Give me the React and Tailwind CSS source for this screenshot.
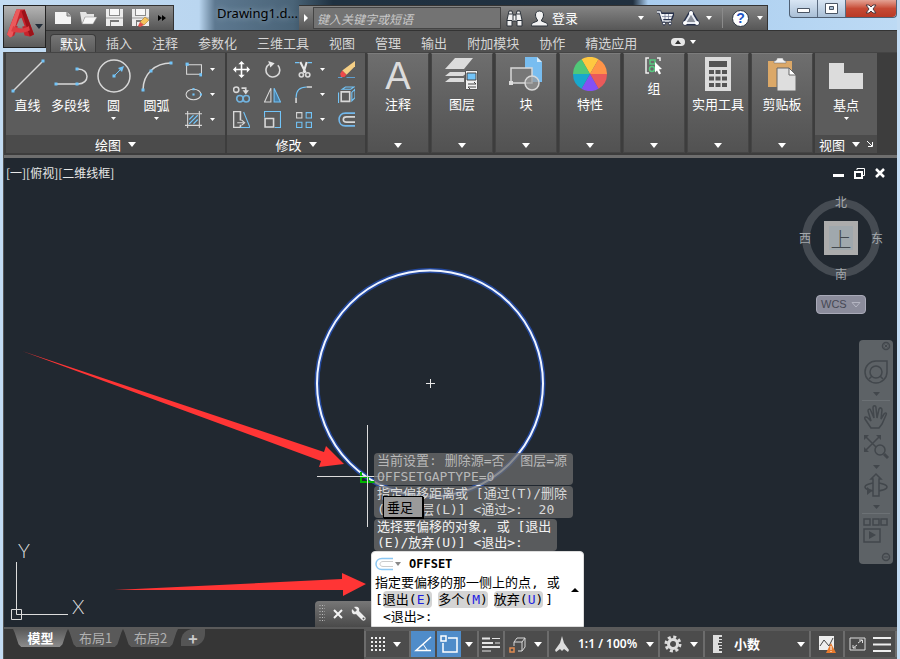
import clsx from "clsx";

const MENU_TABS = ["默认", "插入", "注释", "参数化", "三维工具", "视图", "管理", "输出", "附加模块", "协作", "精选应用"];

function Caret({ className = "h-1 w-1.5" }) {
  return (
    <svg viewBox="0 0 6 4" preserveAspectRatio="none" className={clsx("shrink-0 fill-current", className)}>
      <path d="M0 0h6L3 4z" />
    </svg>
  );
}

function Icon({ className = "size-4", box = 16, children }) {
  return (
    <svg
      viewBox={`0 0 ${box} ${box}`}
      fill="none"
      stroke="#d8d8d8"
      strokeWidth="1"
      className={clsx("shrink-0", className)}
    >
      {children}
    </svg>
  );
}

function Dots({ points, size = 3 }) {
  return points.map(([x, y]) => (
    <rect key={`${x}-${y}`} x={x - size / 2} y={y - size / 2} width={size} height={size} fill="#72c4f8" stroke="none" />
  ));
}

/* ---------- title bar ---------- */

function AppMenu() {
  return (
    <button
      aria-label="应用程序菜单"
      className="row-span-2 mt-[5px] flex h-[43px] items-start justify-between border border-[#222] bg-gradient-to-b from-[#b4b4b4] to-[#5a5a5a] pt-[3px] pr-[2px] pl-[3px] text-[#222c38]"
    >
      <svg viewBox="0 0 26 28" className="h-[30px] w-[27px]">
        <path d="M9 0h8l9 24-4 2-5-1-4-15-6 15-4 2-3-3z" fill="#c8232c" />
        <path d="M9 0h4L5 26l-2 1-3-3z" fill="#ea5a5c" />
        <path d="M17 0l9 24-4 2-8-24z" fill="#9c1219" />
        <path d="M6 16c5 3 11 3 15 0l1 4c-5 3-12 3-18 1z" fill="#dc3d42" />
        <path d="M12 9l-3 7c2 1 6 1 8 0l-3-8z" fill="#8e8e8e" />
      </svg>
      <Caret className="mt-[15px] h-[5px] w-2" />
    </button>
  );
}

function QuickAccess() {
  return (
    <div className="mt-[5px] flex w-32 items-center gap-2 border-t border-r border-[#333] bg-gradient-to-b from-[#8a8a8a] to-[#565656] pl-2">
      <button aria-label="新建">
        <svg viewBox="0 0 18 16" className="h-4 w-[18px]">
          <path d="M1 2h12l4 4v8H1z" fill="#f4f4f4" />
          <path d="M13 2v4h4" fill="#bbb" stroke="#777" />
        </svg>
      </button>
      <button aria-label="打开">
        <svg viewBox="0 0 18 16" className="h-4 w-[18px]">
          <path d="M0 2h6l1 2h7v3H5L2 14z" fill="#e4e4e4" />
          <path d="M5 7h12l-4 7H2z" fill="#f7f7f7" stroke="#888" strokeWidth=".5" />
        </svg>
      </button>
      <button aria-label="保存">
        <SaveGlyph />
      </button>
      <button aria-label="另存为">
        <SaveGlyph pencil />
      </button>
      <button aria-label="自定义">
        <svg viewBox="0 0 8 6" className="h-1.5 w-2 fill-black">
          <path d="M0 0l4 3-4 3zM4 0l4 3-4 3z" />
        </svg>
      </button>
    </div>
  );
}

function SaveGlyph({ pencil }) {
  return (
    <svg viewBox="0 0 18 18" className="size-[18px]">
      <path d="M0 0h17v17H0z" fill="#ececec" />
      <path d="M3 0h11v7H3z" fill="#8a8a8a" />
      <path d="M4 0h9v6H4z" fill="#f7f7f7" />
      <path d="M0 9h17" stroke="#999" />
      <path d="M4 11h9v6H4z" fill="#777" />
      <path d="M5 13h8v4H5z" fill="#eee" />
      {pencil && (
        <>
          <path d="M8 13l5-5 4 3-5 5z" fill="#f4c45c" stroke="#9a6a20" strokeWidth=".5" />
          <path d="M8 13l4 3-4 2-2-1z" fill="#e05048" />
        </>
      )}
    </svg>
  );
}

function InfoCenter() {
  return (
    <div className="mt-[5px] flex w-[469px] items-center border-t border-r border-[#333] bg-gradient-to-b from-[#858585] to-[#575757] text-white">
      <button aria-label="展开" className="flex w-[14px] justify-center">
        <svg viewBox="0 0 4 8" className="h-2 w-1 fill-white">
          <path d="M0 0l4 4-4 4z" />
        </svg>
      </button>
      <input
        aria-label="搜索"
        placeholder="键入关键字或短语"
        className="h-[22px] w-[188px] border border-[#444] bg-[#737373] pl-[3px] text-[12px] italic placeholder:text-[#c9c9c9]"
      />
      <button aria-label="查找" className="ml-[5px]">
        <svg viewBox="0 0 17 17" className="size-[17px]" stroke="#2c333b">
          <path d="M3 1h3l1 4h3l1-4h3l2 9v6h-5v-5H6v5H1v-6z" fill="#f2f2f2" />
          <path d="M1 10.500h5M11 10.500h5M7 5v5M10 5v5M3 4h3M11 4h3" />
        </svg>
      </button>
      <button className="ml-2 flex items-center gap-1 text-[13px]">
        <svg viewBox="0 0 17 17" className="size-[17px]" fill="#f2f2f2" stroke="#2c333b">
          <path d="M8.500 1c3 0 4 2 4 4s-1 4-2 5v1l5 2c1 1 1 2 1 3H.5c0-1 0-2 1-3l5-2v-1c-1-1-2-3-2-5s1-4 4-4z" />
        </svg>
        登录
      </button>
      <button aria-label="登录选项" className="ml-auto">
        <Caret />
      </button>
      <button aria-label="商店" className="ml-3">
        <svg viewBox="0 0 18 16" className="h-4 w-[18px]" fill="none">
          <path d="M1 2h3l3 9h8M5 4h12l-2 5H6z" stroke="#26304a" strokeWidth="3" />
          <path d="M5 4h12l-2 5H6z" fill="#f0f2f6" />
          <path d="M1 2h3l3 9h8" stroke="#f0f2f6" strokeWidth="1.500" />
          <path d="M6 6.500h10M9 4v5M12.500 4v5" stroke="#6d7690" strokeWidth=".7" />
          <circle cx="8" cy="13.500" r="1.500" fill="#fff" stroke="#26304a" />
          <circle cx="14" cy="13.500" r="1.500" fill="#fff" stroke="#26304a" />
        </svg>
      </button>
      <button aria-label="A360" className="ml-2 flex items-center gap-1.5">
        <svg viewBox="0 0 18 16" className="h-4 w-[18px]" fill="none">
          <path d="M9 3l6 10H3z" stroke="#26304a" strokeWidth="5" strokeLinejoin="round" />
          <path d="M9 3l6 10H3z" stroke="#e8ecf4" strokeWidth="2" fill="#8a8f9a" />
          <circle cx="9" cy="3" r="2" fill="#fff" />
          <circle cx="15" cy="13" r="2" fill="#fff" />
          <circle cx="3" cy="13" r="2" fill="#fff" />
        </svg>
        <Caret />
      </button>
      <span className="ml-[10px] h-5 w-px bg-[#8a8a8a]" />
      <button aria-label="帮助" className="mr-1 ml-[9px] flex items-center gap-2">
        <span className="flex size-[17px] items-center justify-center rounded-full border border-[#2b3440] bg-white font-['Liberation_Sans'] text-[14px] leading-none font-bold text-[#1b54c4]">
          ?
        </span>
        <Caret />
      </button>
    </div>
  );
}

function WindowButtons() {
  return (
    <div className="ml-auto flex h-[18px] w-[108px] self-start rounded-b border border-t-0 border-[#4e5f73] bg-gradient-to-b from-[#d9e6f4] to-[#a9bfd6]">
      <button aria-label="最小化" className="flex flex-1 items-center justify-center border-r border-[#5a6b80] pt-1">
        <svg viewBox="0 0 13 6" className="h-1.5 w-[13px]">
          <path d="M.5.5h12v4H.5z" fill="#fff" stroke="#4a5564" />
        </svg>
      </button>
      <button aria-label="最大化" className="flex flex-1 items-center justify-center border-r border-[#5a6b80]">
        <svg viewBox="0 0 13 11" className="h-[11px] w-[13px]">
          <path d="M.5.5h12v10H.5z" fill="#fff" stroke="#4a5564" />
          <path d="M4.500 3.500h4v3h-4z" fill="#a8bdd2" stroke="#4a5564" />
        </svg>
      </button>
      <button
        aria-label="关闭"
        className="flex w-[50px] items-center justify-center rounded-br bg-gradient-to-b from-[#e3a294] via-[#c64a35] to-[#b93a26]"
      >
        <svg viewBox="0 0 12 10" className="h-[10px] w-3">
          <path d="M1 1h3l2 2 2-2h3L8 5l3 4H8L6 7 4 9H1l3-4z" fill="#fff" stroke="#4d3a40" />
        </svg>
      </button>
    </div>
  );
}

function Header() {
  return (
    <header className="grid grid-cols-[43px_1fr] grid-rows-[30px_22px] bg-[linear-gradient(90deg,#c3dcf3_0,#bad6f0_196px,#5d7890_212px,#4a6478_290px,#1f3141_330px,#21303f_630px,#a9cdef_645px,#bddaf4_100%)]">
      <AppMenu />
      <div className="flex min-w-0">
        <QuickAccess />
        <h1 className="ml-auto w-[82px] pt-[5px] font-['Noto_Sans'] text-[13px] leading-4 whitespace-nowrap text-black [text-shadow:0_0_6px_#a9bccc]">
          Drawing1.d...
        </h1>
        <InfoCenter />
        <div className="flex w-[129px]">
          <WindowButtons />
        </div>
      </div>
      <nav className="flex border-t border-[#333] bg-[#505050] pl-1">
        {MENU_TABS.map((t, i) => (
          <button
            key={t}
            className={clsx(
              "text-[13px] leading-[18px] whitespace-nowrap",
              i === 0
                ? "mt-[3px] rounded-t-sm border-x border-t border-[#3c3c3c] bg-gradient-to-b from-[#757575] to-[#5c5c5c] px-[9px] text-white"
                : "px-[10px] pt-[2px] text-[#d6d6d6]"
            )}
          >
            {t}
          </button>
        ))}
        <button aria-label="最小化功能区" className="ml-6 flex items-center gap-[5px] text-white">
          <span className="flex h-2 w-[14px] items-center justify-center rounded-sm bg-[#e6e6e6] text-[#333]">
            <Caret className="h-1 w-1.5 rotate-180" />
          </span>
          <Caret />
        </button>
      </nav>
    </header>
  );
}

/* ---------- ribbon ---------- */

const DRAW_TOOLS = [
  {
    label: "直线",
    icon: (
      <>
        <path d="M2 32L31 3" strokeWidth="1.500" />
        <Dots points={[[2, 32], [32, 2]]} />
      </>
    ),
  },
  {
    label: "多段线",
    icon: (
      <>
        <path d="M2 25h22c12 0 12-15 0-15" strokeWidth="1.500" />
        <Dots points={[[2, 25], [23, 25], [23, 10]]} />
      </>
    ),
  },
  {
    label: "圆",
    menu: true,
    icon: (
      <>
        <circle cx="17" cy="17" r="16" strokeWidth="1.500" />
        <path d="M17 17l7-7" stroke="#72c4f8" />
        <path d="M21 9l6-2-2 6z" fill="#72c4f8" stroke="none" />
        <Dots points={[[17, 17]]} />
      </>
    ),
  },
  {
    label: "圆弧",
    menu: true,
    icon: (
      <>
        <path d="M3 31C3 15 15 4 31 4" strokeWidth="1.500" />
        <Dots points={[[3, 31], [11, 12], [31, 4]]} />
      </>
    ),
  },
];

const SHAPE_TOOLS = [
  {
    name: "矩形",
    icon: (
      <>
        <path d="M1.500 3.500h14v9h-14z" />
        <Dots points={[[2, 3], [15, 13]]} />
      </>
    ),
  },
  {
    name: "椭圆",
    icon: (
      <>
        <ellipse cx="8" cy="8" rx="7" ry="5" />
        <Dots points={[[8, 3], [15, 8], [8, 8]]} size={2} />
      </>
    ),
  },
  {
    name: "图案填充",
    icon: (
      <>
        <path d="M0 2.500h16M0 13.500h16M2.500 0v16M13.500 0v16" />
        <path d="M4 8l4-4M4 12l8-8M8 12l4-4" stroke="#72c4f8" />
      </>
    ),
  },
];

const MODIFY_TOOLS = [
  {
    name: "移动",
    icon: (
      <>
        <path d="M8 2v12M2 8h12" strokeWidth="1.500" stroke="#fff" />
        <path d="M8 0l3 3H5zM8 16l3-3H5zM0 8l3-3v6zM16 8l-3-3v6z" fill="#fff" stroke="none" />
      </>
    ),
  },
  {
    name: "旋转",
    icon: (
      <>
        <path d="M5 3a6.500 6.500 0 1 0 8 1" strokeWidth="1.500" />
        <path d="M4 0l6 2-4 4z" fill="#e6e6e6" stroke="none" />
      </>
    ),
  },
  {
    name: "修剪",
    menu: true,
    icon: (
      <>
        <path d="M0 1.500h4M12 1.500h4" stroke="#72c4f8" />
        <path d="M5 1l5 10M11 1L8 11" strokeWidth="2" stroke="#e8e8e8" />
        <circle cx="6" cy="13" r="2" strokeWidth="1.500" />
        <circle cx="12" cy="13" r="2" strokeWidth="1.500" />
      </>
    ),
  },
  {
    name: "删除",
    icon: (
      <>
        <path d="M16 0v5l-8 8-4-4z" fill="#f5cf85" stroke="none" />
        <path d="M4 9l4 4-2 2H3l-1-3z" fill="#ee4a4a" stroke="none" />
        <path d="M0 15.500h4M8 15.500h8" stroke="#5f9fd0" />
      </>
    ),
  },
  {
    name: "复制",
    icon: (
      <>
        <circle cx="3" cy="3.500" r="2.500" strokeWidth="1.500" />
        <path d="M8 2h4v3" strokeWidth="1.500" />
        <path d="M9 4h6l-3 4z" fill="#ddd" stroke="none" />
        <circle cx="6.500" cy="12" r="3" stroke="#72b4e0" strokeWidth="1.500" />
        <circle cx="12.500" cy="12" r="3" stroke="#72b4e0" strokeWidth="1.500" />
      </>
    ),
  },
  {
    name: "镜像",
    icon: (
      <>
        <path d="M6.500 2v13H.5z" />
        <path d="M9.500 2v13h6z" stroke="#72c4f8" fill="#4a7fa6" />
      </>
    ),
  },
  {
    name: "圆角",
    menu: true,
    icon: (
      <>
        <path d="M1 11C1 4 5 1 11 1" stroke="#72c4f8" />
        <path d="M1 11v5M11 1h5" strokeWidth="1.500" />
      </>
    ),
  },
  {
    name: "分解",
    icon: (
      <>
        <path d="M3 5.500h8v9H3z" strokeWidth="1.500" />
        <path d="M4 3l3-2h8l-3 2zM13 6l3-3v8l-3 3zM.5 6v10" stroke="#72c4f8" />
      </>
    ),
  },
  {
    name: "拉伸",
    icon: (
      <>
        <path d="M7 9V.5H.5v15H7V13" strokeWidth="1.500" />
        <path d="M10 1l6 14.500H7" stroke="#72c4f8" />
        <path d="M4 11h6M8 8.500l3 2.500-3 2.500" />
      </>
    ),
  },
  {
    name: "缩放",
    icon: (
      <>
        <path d="M.5 6V.5h15v15H10" stroke="#72c4f8" />
        <path d="M1 7h8v8H1z" strokeWidth="1.500" />
      </>
    ),
  },
  {
    name: "阵列",
    menu: true,
    icon: (
      <>
        <path d="M1.500 1.500h5v5h-5z" />
        <path d="M10.500 1.500h5v5h-5zM1.500 10.500h5v5h-5zM10.500 10.500h5v5h-5z" stroke="#72c4f8" />
      </>
    ),
  },
  {
    name: "偏移",
    icon: (
      <>
        <path d="M16 2H7C-1 2-1 14 7 14h9" stroke="#72b8ec" strokeWidth="1.500" />
        <path d="M16 5.500H8c-4 0-4 5 0 5h8" strokeWidth="1.500" />
      </>
    ),
  },
];

const COLLAPSED_PANELS = [
  {
    label: "注释",
    icon: (
      <text x="17" y="32" textAnchor="middle" className="font-['Liberation_Sans'] text-[38px]" fill="#dcdcdc" stroke="none">
        A
      </text>
    ),
  },
  {
    label: "图层",
    icon: (
      <>
        <path d="M10 1h18l-9 11H0zM5 15h18l-5 4H0zM5 21h14v4H0z" fill="#dcdcdc" stroke="none" />
        <path d="M20.500 13.500h12v19h-12z" fill="#f0f0f0" stroke="#555" />
        <path d="M22 16h9v7h-9z" fill="#72c4f8" stroke="#444" />
        <path d="M23 27h8l-2-2M31 30h-8l2 2" stroke="#444" />
      </>
    ),
  },
  {
    label: "块",
    icon: (
      <>
        <path d="M16 0h12l5 5v20H16z" fill="#78bdf0" stroke="none" />
        <path d="M28 0v5h5z" fill="#d6ecfb" stroke="none" />
        <path d="M2 11h21v15H2z" fill="#777" strokeWidth="1.500" />
        <circle cx="23" cy="26" r="7" fill="#999" fillOpacity=".7" strokeWidth="1.500" />
        <path d="M0 24h4v4H0z" fill="#ddd" stroke="none" />
      </>
    ),
  },
  {
    label: "特性",
    icon: (
      <g stroke="none">
        <path d="M17 17L8.500 2.300A17 17 0 0 1 25.500 2.300z" fill="#ffc840" />
        <path d="M17 17L25.500 2.300A17 17 0 0 1 34 17z" fill="#ff9448" />
        <path d="M17 17H34A17 17 0 0 1 25.500 31.700z" fill="#ea5a5a" />
        <path d="M17 17L25.500 31.700A17 17 0 0 1 8.500 31.700z" fill="#8450f4" />
        <path d="M17 17L8.500 31.700A17 17 0 0 1 0 17z" fill="#18a8cc" />
        <path d="M17 17H0A17 17 0 0 1 8.500 2.300z" fill="#50c878" />
      </g>
    ),
  },
  {
    label: "组",
    small: true,
    icon: (
      <>
        <path d="M4 1H1v15h3M12 1h3v3" strokeWidth="1.500" stroke="#eee" />
        <path d="M5 3h5v4H5z" stroke="#58c880" strokeWidth="1.500" />
        <circle cx="7" cy="12" r="2.500" stroke="#58c880" strokeWidth="1.500" />
        <path d="M10 5l7 7-3 .5 2 4-2 1-2-4-2 2z" fill="#fff" stroke="none" />
      </>
    ),
  },
  {
    label: "实用工具",
    icon: (
      <>
        <path d="M4 0h26v34H4z" fill="#dcdcdc" stroke="none" />
        <path d="M8 4h18v6H8z" fill="#555" stroke="none" />
        <path d="M8 15h18M8 21.500h18M8 28h18" stroke="#555" strokeWidth="4" strokeDasharray="5 1.500" />
      </>
    ),
  },
  {
    label: "剪贴板",
    icon: (
      <>
        <path d="M3 4h24v26H3z" fill="#dba868" stroke="none" />
        <path d="M9 4c2 0 3-1 3-3h6c0 2 1 3 3 3v2H9z" fill="#f2f2f2" stroke="#666" strokeWidth=".5" />
        <path d="M12 11h12l7 7v16H12z" fill="#dedede" stroke="#666" />
        <path d="M24 11v7h7z" fill="#fff" stroke="#666" />
      </>
    ),
  },
];

function PanelTitle({ children }) {
  return (
    <button className="flex h-[18px] items-center justify-center gap-[7px] bg-[#4b4b4b] text-[13px] leading-none text-white">
      {children}
    </button>
  );
}

function Ribbon() {
  return (
    <section className="flex h-[103px] gap-[2px] border-t border-[#444] bg-[#3d3d3d] pb-[2px] pl-[2px] text-white">
      <div className="flex w-[219px] flex-col bg-[#5c5c5c]">
        <div className="flex flex-1">
          {DRAW_TOOLS.map((t) => (
            <button key={t.label} className="flex w-[43px] flex-col items-center pt-1.5 text-[13px]">
              <Icon box={34} className="size-[34px]">
                {t.icon}
              </Icon>
              <span className="pt-1 leading-4 whitespace-nowrap">{t.label}</span>
              {t.menu && <Caret className="mt-1 h-[3px] w-[5px]" />}
            </button>
          ))}
          <div className="ml-auto flex w-10 flex-col pt-1">
            {SHAPE_TOOLS.map((t) => (
              <button key={t.name} aria-label={t.name} className="flex h-[25px] items-center gap-2">
                <Icon className="size-[17px]">{t.icon}</Icon>
                <Caret className="h-[3px] w-[5px]" />
              </button>
            ))}
          </div>
        </div>
        <PanelTitle>
          绘图
          <Caret className="h-[5px] w-2" />
        </PanelTitle>
      </div>

      <div className="flex w-[138px] flex-col bg-[#5c5c5c]">
        <div className="grid flex-1 grid-cols-[31px_31px_43px_20px] content-start pt-1 pl-1.5">
          {MODIFY_TOOLS.map((t) => (
            <button key={t.name} aria-label={t.name} className="flex h-[25px] items-center gap-2">
              <Icon className="size-[17px]">{t.icon}</Icon>
              {t.menu && <Caret className="h-[3px] w-[5px]" />}
            </button>
          ))}
        </div>
        <PanelTitle>
          修改
          <Caret className="h-[5px] w-2" />
        </PanelTitle>
      </div>

      {COLLAPSED_PANELS.map((p) => (
        <button
          key={p.label}
          className="flex w-[62px] flex-col items-center border border-[#454545] border-t-[#7c7c7c] bg-gradient-to-b from-[#6e6e6e] to-[#525252] pt-[3px] pb-1 text-[13px]"
        >
          <Icon box={p.small ? 18 : 34} className={p.small ? "size-[18px]" : "size-[34px]"}>
            {p.icon}
          </Icon>
          <span className="pt-[5px] leading-4 whitespace-nowrap">{p.label}</span>
          <Caret className="mt-auto h-[5px] w-2" />
        </button>
      ))}

      <div className="flex w-[62px] flex-col bg-[#5c5c5c]">
        <button className="flex flex-1 flex-col items-center pt-1.5 text-[13px]">
          <Icon box={34} className="size-[34px]">
            <path d="M0 4h15v10h19v16H0z" fill="#dcdcdc" stroke="none" />
          </Icon>
          <span className="pt-1 leading-4">基点</span>
          <Caret className="mt-1 h-[3px] w-[5px]" />
        </button>
        <PanelTitle>
          视图
          <Caret className="h-[5px] w-2" />
          <svg viewBox="0 0 6 6" className="size-1.5" fill="none" stroke="#fff">
            <path d="M0 0l5 5M5.500 1v4.500H1" />
          </svg>
        </PanelTitle>
      </div>
    </section>
  );
}

/* ---------- drawing area ---------- */

function Drawing() {
  return (
    <svg viewBox="4 158 893 469" className="absolute top-0 left-0 h-[469px] w-[893px]" fill="none">
      <circle cx="430" cy="383.500" r="113" stroke="#2450b8" strokeWidth="5" strokeOpacity=".8" />
      <circle cx="430" cy="383.500" r="113" stroke="#f0f5ff" strokeWidth="2" />
      <path d="M426 383.500h9M430.500 379v9" stroke="#e8e8e8" />

      <path d="M361 472v10h14M361 477h7v5" stroke="#00b400" strokeWidth="2" />
      <path d="M367.500 425v102M317 476.500h68" stroke="#dcdcdc" />

      <path d="M22 351l302 101 2-6 18 18-25 3 2-6z" fill="#ff3535" />
      <path d="M114 590l228-11v-6l24 11-23 12v-6z" fill="#ff3535" />

      <g stroke="#dcdcdc">
        <path d="M11.500 609.500h10v10h-10zM16.500 562v52.500H68" />
      </g>
      <g fill="#dcdcdc" className="font-['Lato'] text-[20px] font-light">
        <text x="18" y="558">Y</text>
        <text x="72" y="614">X</text>
      </g>
    </svg>
  );
}

function ViewCube() {
  return (
    <div className="absolute top-9 right-3 flex w-[88px] flex-col items-center text-[12px] text-[#a4a8ac]">
      <div className="relative grid h-[88px] w-[88px] grid-cols-[16px_1fr_16px] grid-rows-[16px_1fr_16px] place-items-center leading-4">
        <svg viewBox="0 0 88 88" className="absolute inset-0 size-[88px]" fill="none">
          <circle cx="44" cy="44" r="35" stroke="#454b52" strokeWidth="8" />
        </svg>
        <span className="relative col-start-2 row-start-1">北</span>
        <span className="relative col-start-1 row-start-2">西</span>
        <button className="relative col-start-2 row-start-2 flex size-[34px] items-center justify-center border-[5px] border-[#acacac] bg-[#a0a8ad] text-[21px] leading-none font-light text-[#42484e]">
          上
        </button>
        <span className="relative col-start-3 row-start-2">东</span>
        <span className="relative col-start-2 row-start-3">南</span>
      </div>
      <button className="mt-[13px] flex h-[19px] w-[50px] items-center justify-between rounded border border-[#a9aab8] bg-[#8b8c9b] px-1 font-['Liberation_Sans'] text-[11px] text-[#474955]">
        WCS
        <svg viewBox="0 0 10 6" className="h-1.5 w-[10px]" fill="none" stroke="#b4b5c2">
          <path d="M1 .5h8L5 5z" />
        </svg>
      </button>
    </div>
  );
}

function NavBar() {
  return (
    <div className="absolute top-[182px] right-[4px] h-[224px] w-[34px] rounded bg-[#5d6266]">
      <svg viewBox="0 0 34 224" className="h-[224px] w-[34px]" fill="none" stroke="#42474c" strokeWidth="1.500">
        <circle cx="27" cy="6" r="3.500" />
        <path d="M25.500 4.500l3 3M28.500 4.500l-3 3" strokeWidth="1" />
        <path d="M17 21h11v11a11 11 0 1 1-11-11z" />
        <circle cx="17" cy="32" r="6" />
        <path d="M10 39l3-3M24 39l-3-3" />
        <path d="M14 52h7l-3.500 4z" fill="#42474c" stroke="none" />
        <path d="M3 60.500h28" stroke="#6c7175" strokeWidth="1" />
        <path d="M12 88l-6-9c-1-2 1-3 3-1l3 3-3-10c0-2 2-3 3 0l3 7-1-10c0-3 3-3 3 0l1 10 2-9c1-2 3-1 3 1l-1 9 3-5c2-2 3-1 2 1l-4 9-3 4z" />
        <path d="M6 96l15 15M21 96L6 111" strokeWidth="1.500" />
        <path d="M5 95h5l-5 5zM22 95v5l-5-5zM5 112v-5l5 5z" fill="#42474c" stroke="none" />
        <circle cx="21" cy="110" r="5" fill="#5d6266" />
        <path d="M25 114l4 4" strokeWidth="3" />
        <path d="M14 125h7l-3.500 4z" fill="#42474c" stroke="none" />
        <ellipse cx="17" cy="147" rx="11" ry="4" />
        <path d="M14 156v-17h-2l5-5 5 5h-2v17z" fill="#5d6266" />
        <path d="M8 147l5 4-5 4z" fill="#42474c" stroke="none" />
        <path d="M14 165h7l-3.500 4z" fill="#42474c" stroke="none" />
        <path d="M3 173.500h28" stroke="#6c7175" strokeWidth="1" />
        <path d="M5 179h6v6H5zM14 179h6v6h-6zM22 179h6v6h-6zM5 189h16v13H5z" />
        <path d="M10 191l7 4-7 4z" fill="#42474c" stroke="none" />
        <circle cx="27" cy="217" r="3.500" />
        <path d="M25 217h4" strokeWidth="1" />
      </svg>
    </div>
  );
}

const HISTORY = [
  { text: "当前设置: 删除源=否  图层=源\nOFFSETGAPTYPE=0", tone: "w-[199px] text-[#b8b8b8]" },
  { text: "指定偏移距离或 [通过(T)/删除\n(E)/图层(L)] <通过>:  20", tone: "w-[199px] text-[#dadada]" },
  { text: "选择要偏移的对象, 或 [退出\n(E)/放弃(U)] <退出>:", tone: "w-[183px] text-[#f2f2f2]" },
];

function Option({ label, hotkey }) {
  return (
    <button className="rounded-sm bg-[#d4d4d4]">
      {label}(<b className="font-normal text-[#1f1fe0]">{hotkey}</b>)
    </button>
  );
}

function CommandLine() {
  return (
    <div className="absolute top-[295px] left-[311px] font-['DejaVu_Sans_Mono','Noto_Sans_CJK_SC',monospace] text-[13px]">
      <div className="ml-[59px] flex flex-col items-start gap-px">
        {HISTORY.map((h) => (
          <p
            key={h.text}
            className={clsx("h-8 rounded-sm bg-[#6c6c6c]/75 pl-[3px] leading-4 whitespace-pre", h.tone)}
          >
            {h.text}
          </p>
        ))}
      </div>
      <div className="flex items-end">
        <div className="flex h-[26px] w-14 items-center justify-between rounded-tl bg-gradient-to-b from-[#777] to-[#4a4a4a] pr-1 pl-1">
          <svg viewBox="0 0 6 18" className="h-[18px] w-1.5" stroke="#bbb" strokeDasharray="1 2">
            <path d="M1 0v18M3.500 0v18M6 0v18" />
          </svg>
          <button aria-label="关闭命令行">
            <svg viewBox="0 0 10 10" className="size-[10px]" stroke="#f4f4f4" strokeWidth="2">
              <path d="M1 1l8 8M9 1L1 9" />
            </svg>
          </button>
          <button aria-label="自定义命令行">
            <svg viewBox="0 0 16 16" className="size-4">
              <path d="M1 3l3 3 2-2-3-3c4-1 6 1 5 4l6 6c2 2-1 5-3 3L5 8C2 9 0 7 1 3z" fill="#eee" />
              <circle cx="12.500" cy="12.500" r="1" fill="#555" />
            </svg>
          </button>
        </div>
        <div className="relative h-[76px] w-[213px] rounded-t-sm border border-[#ddd] bg-white pt-[2px] pl-[3px] text-black">
          <div className="flex h-5 items-center">
            <svg viewBox="0 0 18 14" className="h-[14px] w-[18px]" fill="none">
              <path d="M18 1.500H7c-8 0-8 11 0 11h11" stroke="#8cc8f4" strokeWidth="1.500" />
              <path d="M18 4.500H8c-4 0-4 5 0 5h10" stroke="#ccc" />
            </svg>
            <Caret className="ml-0.5 h-1 w-1.5 text-[#888]" />
            <b className="ml-2 text-[12px]">OFFSET</b>
          </div>
          <p className="leading-[17px]">指定要偏移的那一侧上的点, 或</p>
          <p className="flex gap-[6px] leading-[17px]">
            <span className="-mr-[6px]">[</span>
            <Option label="退出" hotkey="E" />
            <Option label="多个" hotkey="M" />
            <Option label="放弃" hotkey="U" />
            <span className="-ml-1">]</span>
          </p>
          <p className="pl-2 leading-[17px]">&lt;退出&gt;:</p>
          <Caret className="absolute top-9 right-1 h-1 w-2 rotate-180" />
        </div>
      </div>
    </div>
  );
}

function Canvas() {
  return (
    <main className="relative min-h-[469px] flex-1 overflow-hidden bg-[#212830]">
      <Drawing />
      <div className="relative flex items-center justify-between pt-[7px] pr-3 pl-[2px] text-[12px] leading-4 text-[#e8e8e8]">
        <span>[一][俯视][二维线框]</span>
        <div className="flex items-center gap-[10px]">
          <button aria-label="最小化视口">
            <svg viewBox="0 0 11 11" className="size-[11px]">
              <path d="M0 6h11v3H0z" fill="#fff" />
            </svg>
          </button>
          <button aria-label="还原视口">
            <svg viewBox="0 0 11 11" className="size-[11px]" fill="none" stroke="#fff">
              <path d="M3 2V.5h7.500v7H9" />
              <path d="M1 4h7v6H1z" strokeWidth="2" />
            </svg>
          </button>
          <button aria-label="关闭视口">
            <svg viewBox="0 0 10 10" className="size-[10px]" stroke="#fff" strokeWidth="2.500">
              <path d="M1 1l8 8M9 1L1 9" />
            </svg>
          </button>
        </div>
      </div>
      <ViewCube />
      <NavBar />
      <CommandLine />
      <span className="absolute top-[338px] left-[379px] w-10 border border-black bg-[#9a9a9a] pl-[3px] text-[13px] leading-5 text-black shadow-[1px_1px_0_#000]">
        垂足
      </span>
    </main>
  );
}

/* ---------- status bar ---------- */

function LayoutTab({ label, active }) {
  return (
    <button
      className={clsx(
        "h-[18px] w-[55px] text-[13px] leading-[18px] [clip-path:polygon(0_0,100%_0,97%_20%,90%_85%,85%_100%,15%_100%,10%_85%,3%_20%)]",
        active ? "bg-gradient-to-b from-[#5a5a5a] to-[#8c8c8c] font-bold text-white" : "bg-[#595959] text-[#b0b0b0]"
      )}
    >
      {label}
    </button>
  );
}

function StatusGroup({ className, children }) {
  return (
    <div className={clsx("flex items-center border-l-2 border-[#6c6c6c] text-white", className)}>
      {children}
    </div>
  );
}

function StatusBar() {
  return (
    <footer className="flex h-8 border-t-2 border-[#5a5a5a] bg-[#363636]">
      <div className="flex items-start pl-[9px]">
        <LayoutTab label="模型" active />
        <LayoutTab label="布局1" />
        <LayoutTab label="布局2" />
        <button
          aria-label="新建布局"
          className="ml-[3px] h-[17px] w-6 rounded-tl-xl rounded-br-xl bg-[#555] text-[16px] leading-[16px] font-bold text-[#ccc]"
        >
          +
        </button>
      </div>
      <div className="ml-auto flex border-y-2 border-[#5a5a5a] bg-[#4c4c4c]">
        <StatusGroup className="w-[45px] gap-2 pl-[5px]">
          <svg viewBox="0 0 14 14" className="size-[14px]" fill="#eee">
            {[0, 4, 8, 12].map((x) =>
              [0, 4, 8, 12].map((y) => <rect key={`${x}-${y}`} x={x} y={y} width="2" height="2" />)
            )}
          </svg>
          <Caret className="h-[5px] w-2" />
        </StatusGroup>
        <StatusGroup className="w-[68px] gap-[2px]">
          <button aria-label="极轴追踪" className="flex h-full w-6 items-center justify-center bg-[#4f8cc9]">
            <Icon className="size-[18px]" box={18}>
              <path d="M17 2L2 15.500h15" stroke="#fff" strokeWidth="1.500" />
              <path d="M9 9l4 6" stroke="#fff" />
            </Icon>
          </button>
          <button aria-label="对象捕捉" className="flex h-full w-6 items-center justify-center bg-[#4f8cc9]">
            <Icon className="size-[18px]" box={18}>
              <path d="M8 3h9v14H3V8M1 1h5v5H1z" stroke="#fff" strokeWidth="1.500" />
            </Icon>
          </button>
          <Caret className="ml-0.5 h-[5px] w-2" />
        </StatusGroup>
        <StatusGroup className="w-[26px] justify-center">
          <Icon className="size-[18px]" box={18}>
            <path d="M0 3.500h8M0 8h11M0 12h18" stroke="#e4e4e4" strokeWidth="2" />
            <path d="M10 3.500h8M13 8h5M0 16h9" stroke="#e4e4e4" />
          </Icon>
        </StatusGroup>
        <StatusGroup className="w-[44px] gap-2 pl-1">
          <Icon className="size-[17px]" box={17}>
            <path d="M5 6h8v9H9M5 6l3-4h8l-3 4M16 2v9l-3 4M5 6v4" />
            <path d="M1 12h4v4H1z" stroke="#e08a50" strokeWidth="1.500" />
          </Icon>
          <Caret className="h-[5px] w-2" />
        </StatusGroup>
        <StatusGroup className="relative w-[111px] pl-[5px]">
          <Icon>
            <path d="M8 0l2 7 5 7-1 2-4-3-2 2-2-2-4 3-1-2 5-7z" fill="#ddd" stroke="none" />
          </Icon>
          <select
            aria-label="注释比例"
            className="ml-2 w-[76px] appearance-none bg-transparent font-['Noto_Sans'] text-[12px] font-semibold"
            defaultValue="100"
          >
            <option value="100">1:1 / 100%</option>
          </select>
          <Caret className="pointer-events-none absolute right-1 h-[5px] w-2" />
        </StatusGroup>
        <StatusGroup className="w-[45px] gap-2 pl-1">
          <Icon className="size-[18px]" box={18}>
            <circle cx="9" cy="9" r="7" stroke="#ddd" strokeWidth="3" strokeDasharray="3 2.500" />
            <circle cx="9" cy="9" r="4.500" stroke="#ddd" strokeWidth="3" />
          </Icon>
          <Caret className="h-[5px] w-2" />
        </StatusGroup>
        <StatusGroup className="relative w-[106px] pl-2">
          <Icon className="size-[18px]" box={18}>
            <path d="M0 0h9v2H6v2h3v1H6v2h3v1H5v2h4v1H6v2h3v1H6v2h3v2H0z" fill="#ddd" stroke="none" />
          </Icon>
          <select
            aria-label="单位"
            className="ml-[3px] w-[68px] appearance-none bg-transparent text-[13px] font-bold"
            defaultValue="decimal"
          >
            <option value="decimal">小数</option>
          </select>
          <Caret className="pointer-events-none absolute right-1 h-[5px] w-2" />
        </StatusGroup>
        <StatusGroup className="w-[34px] justify-center">
          <Icon className="size-[17px]" box={17}>
            <path d="M0 0h15v14H0z" fill="#eee" stroke="none" />
            <path d="M1 10l4-6 5 6 4-8" stroke="#444" />
            <path d="M12 7l5 10H7z" fill="#e87a2c" stroke="none" />
            <path d="M12 10v4M12 15v1" stroke="#fff" />
          </Icon>
        </StatusGroup>
        <StatusGroup className="w-[54px] justify-around border-r-2">
          <svg viewBox="0 0 17 14" className="h-[14px] w-[17px]" fill="none" stroke="#ddd">
            <path d="M1 1h15v12H1zM9 6l4-3M10 3h3.500v3M8 8l-4 3M4 8v3h3" />
          </svg>
          <button aria-label="自定义">
            <svg viewBox="0 0 18 15" className="h-[15px] w-[18px]" stroke="#eee" strokeWidth="2">
              <path d="M0 1h18M0 7.500h18M0 14h18" />
            </svg>
          </button>
        </StatusGroup>
      </div>
    </footer>
  );
}

export default function App() {
  return (
    <div className="flex min-h-screen flex-col bg-[#c3dcf3] pr-[3px] pl-[3px] font-['Noto_Sans_CJK_SC',sans-serif]">
      <Header />
      <div className="flex flex-1 flex-col border-l border-[#555] bg-[#3a3a3a]">
        <Ribbon />
        <div className="h-[3px] bg-[#6e6e6e]" />
        <Canvas />
        <StatusBar />
      </div>
    </div>
  );
}
